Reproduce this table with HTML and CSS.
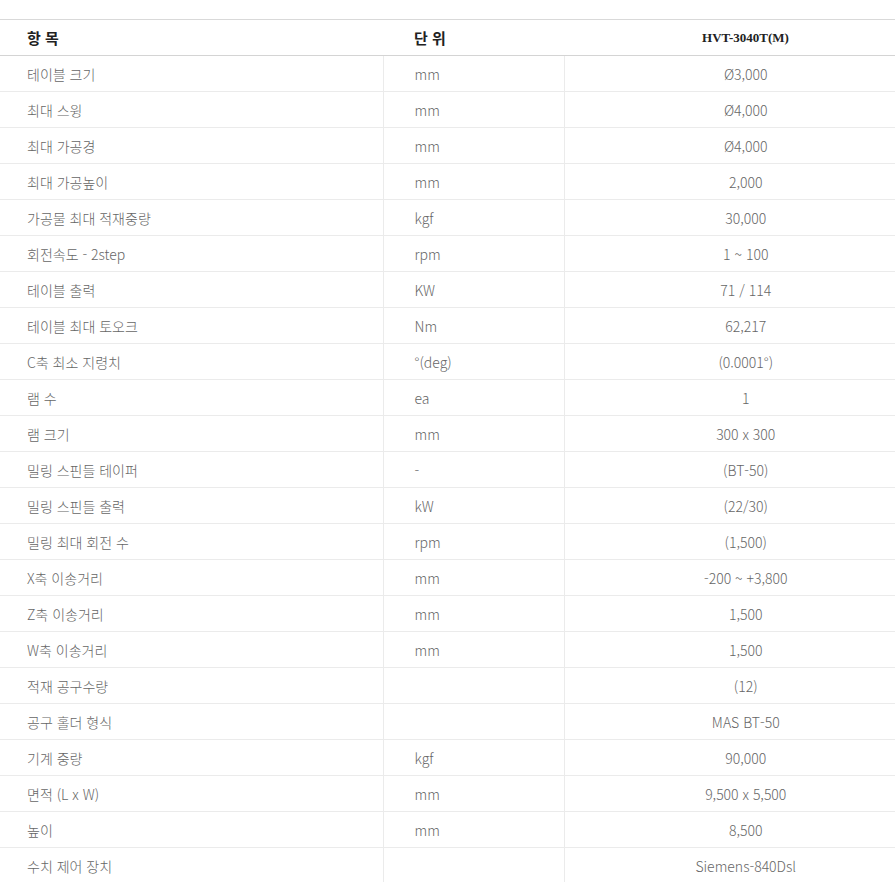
FILE: index.html
```html
<!DOCTYPE html>
<html lang="ko">
<head>
<meta charset="utf-8">
<title>사양</title>
<link rel="stylesheet" href="styles.css">
</head>
<body>
<table class="spec">
  <thead>
    <tr>
      <th class="c-item">항 목</th>
      <th class="c-unit">단 위</th>
      <th class="c-val model">HVT-3040T(M)</th>
    </tr>
  </thead>
  <tbody>
    <tr><td class="c-item">테이블 크기</td><td class="c-unit">mm</td><td class="c-val">Ø3,000</td></tr>
    <tr><td class="c-item">최대 스윙</td><td class="c-unit">mm</td><td class="c-val">Ø4,000</td></tr>
    <tr><td class="c-item">최대 가공경</td><td class="c-unit">mm</td><td class="c-val">Ø4,000</td></tr>
    <tr><td class="c-item">최대 가공높이</td><td class="c-unit">mm</td><td class="c-val">2,000</td></tr>
    <tr><td class="c-item">가공물 최대 적재중량</td><td class="c-unit">kgf</td><td class="c-val">30,000</td></tr>
    <tr><td class="c-item">회전속도 - 2step</td><td class="c-unit">rpm</td><td class="c-val">1 ~ 100</td></tr>
    <tr><td class="c-item">테이블 출력</td><td class="c-unit">KW</td><td class="c-val">71 / 114</td></tr>
    <tr><td class="c-item">테이블 최대 토오크</td><td class="c-unit">Nm</td><td class="c-val">62,217</td></tr>
    <tr><td class="c-item">C축 최소 지령치</td><td class="c-unit">°(deg)</td><td class="c-val">(0.0001°)</td></tr>
    <tr><td class="c-item">램 수</td><td class="c-unit">ea</td><td class="c-val">1</td></tr>
    <tr><td class="c-item">램 크기</td><td class="c-unit">mm</td><td class="c-val">300 x 300</td></tr>
    <tr><td class="c-item">밀링 스핀들 테이퍼</td><td class="c-unit">-</td><td class="c-val">(BT-50)</td></tr>
    <tr><td class="c-item">밀링 스핀들 출력</td><td class="c-unit">kW</td><td class="c-val">(22/30)</td></tr>
    <tr><td class="c-item">밀링 최대 회전 수</td><td class="c-unit">rpm</td><td class="c-val">(1,500)</td></tr>
    <tr><td class="c-item">X축 이송거리</td><td class="c-unit">mm</td><td class="c-val">-200 ~ +3,800</td></tr>
    <tr><td class="c-item">Z축 이송거리</td><td class="c-unit">mm</td><td class="c-val">1,500</td></tr>
    <tr><td class="c-item">W축 이송거리</td><td class="c-unit">mm</td><td class="c-val">1,500</td></tr>
    <tr><td class="c-item">적재 공구수량</td><td class="c-unit"></td><td class="c-val">(12)</td></tr>
    <tr><td class="c-item">공구 홀더 형식</td><td class="c-unit"></td><td class="c-val">MAS BT-50</td></tr>
    <tr><td class="c-item">기계 중량</td><td class="c-unit">kgf</td><td class="c-val">90,000</td></tr>
    <tr><td class="c-item">면적 (L x W)</td><td class="c-unit">mm</td><td class="c-val">9,500 x 5,500</td></tr>
    <tr><td class="c-item">높이</td><td class="c-unit">mm</td><td class="c-val">8,500</td></tr>
    <tr><td class="c-item">수치 제어 장치</td><td class="c-unit"></td><td class="c-val">Siemens-840Dsl</td></tr>
  </tbody>
</table>
</body>
</html>
```

FILE: styles.css
```css
html, body {
  margin: 0;
  padding: 0;
  background: #fff;
}

body {
  padding-top: 19px;
  font-family: "Noto Sans CJK KR", "Noto Sans", sans-serif;
  color: #666;
}

.spec {
  width: 895px;
  border-collapse: collapse;
  table-layout: fixed;
  border-top: 1px solid #d9d9d9;
}

.spec th,
.spec td {
  padding: 0;
  height: 35px;
  vertical-align: middle;
  text-align: left;
  font-size: 14px;
  line-height: 20px;
}

.spec td {
  font-weight: 300;
  border-bottom: 1px solid #ebebeb;
}

.spec th {
  height: 35px;
  font-weight: 700;
  color: #222;
  font-size: 15px;
  border-bottom: 1px solid #d4d4d4;
}

.spec .c-item {
  width: 356px;
  padding-left: 27px;
}

.spec .c-unit {
  width: 150px;
  padding-left: 31px;
}

.spec td.c-unit,
.spec td.c-val {
  border-left: 1px solid #ebebeb;
}

.spec .c-val {
  padding-left: 32px;
  text-align: center;
}

.spec th.model {
  font-family: "Liberation Serif", serif;
  font-size: 13px;
  text-align: center;
}
```
